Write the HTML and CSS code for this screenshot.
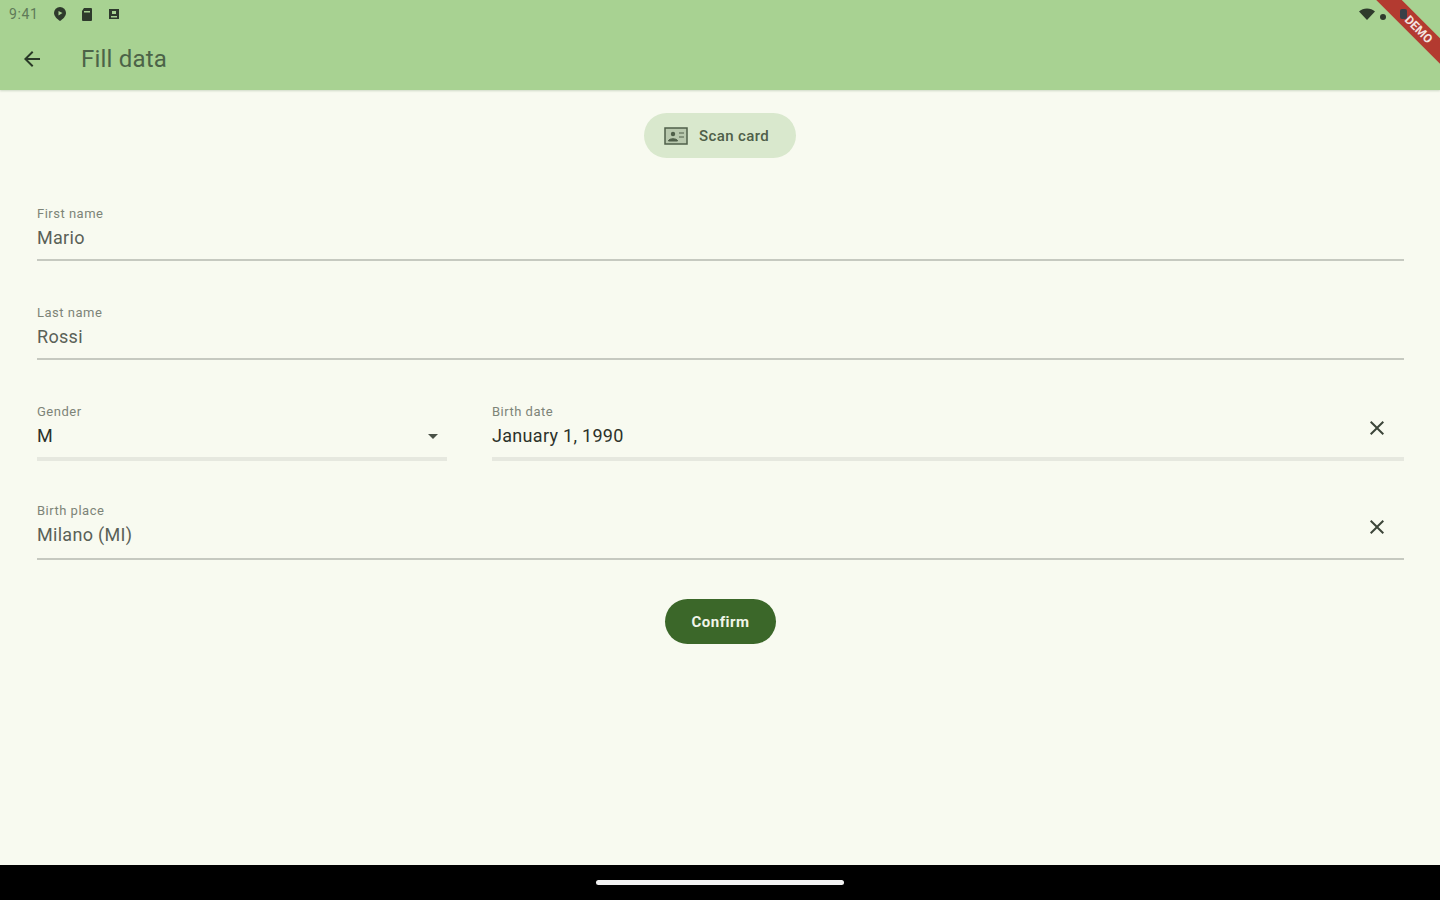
FILE: index.html
```html
<!DOCTYPE html>
<html lang="en">
<head>
    <meta charset="UTF-8">
    <title>Fill data</title>
    <link rel="stylesheet" href="styles.css">
</head>

<body>
<div class="app">
    <header class="top">
        <div class="status">
            <span class="time">9:41</span>
            <svg class="st-icon" viewBox="0 0 16 16"><path d="M8 1a6 6 0 0 1 6 6c0 3-3 6-6 8-3-2-6-5-6-8a6 6 0 0 1 6-6z" fill="#2e3a2c"/><path d="M6.5 5v4.5L10.500 7z" fill="#a8d292"/></svg>
            <svg class="st-icon" viewBox="0 0 16 16"><path d="M5 2h7a1 1 0 0 1 1 1v11a1 1 0 0 1-1 1H4a1 1 0 0 1-1-1V5z" fill="#2e3a2c"/><path d="M5 5h6v1.500H5z" fill="#a8d292"/></svg>
            <svg class="st-icon" viewBox="0 0 16 16"><path d="M3 3h10v10H3z" fill="#2e3a2c"/><path d="M6 5h4v3H6zM5 10h6v1.500H5z" fill="#a8d292"/></svg>
            <span class="status-right">
                <svg class="wifi" viewBox="0 0 16 16"><path d="M0 5.500C4 1.500 12 1.500 16 5.500L8 14z" fill="#2e3a2c"/></svg>
                <span class="dot"></span>
                <span class="battery"></span>
            </span>
        </div>
        <div class="toolbar">
            <svg class="back" viewBox="0 0 24 24"><path d="M20 11H7.800l5.600-5.600L12 4l-8 8 8 8 1.400-1.400L7.800 13H20z" fill="#2a3a28"/></svg>
            <h1 class="title">Fill data</h1>
        </div>
    </header>

    <main class="content">
        <button class="scan-btn">
            <svg class="scan-icon" viewBox="0 0 24 18"><rect x="1" y="1" width="22" height="16" fill="#b9c9ae" stroke="#4f5f49" stroke-width="1.500"/><circle cx="9" cy="7" r="2.200" fill="#4f5f49"/><path d="M4.500 14c0-3 9-3 9 0zM15 6h5M15 10h5" fill="#4f5f49" stroke="#4f5f49"/></svg>
            Scan card
        </button>

        <div class="form">
            <div class="field">
                <label class="field-label">First name</label>
                <div class="field-value muted">Mario</div>
            </div>
            <div class="field">
                <label class="field-label">Last name</label>
                <div class="field-value muted">Rossi</div>
            </div>
            <div class="row">
                <div class="field field-tall field-off gender">
                    <label class="field-label">Gender</label>
                    <div class="field-value">M</div>
                    <span class="caret"></span>
                </div>
                <div class="field field-tall field-off birth">
                    <label class="field-label">Birth date</label>
                    <div class="field-value">January 1, 1990</div>
                    <svg class="clear" viewBox="0 0 24 24"><path d="M19 6.400 17.600 5 12 10.600 6.400 5 5 6.400l5.600 5.600L5 17.600 6.400 19l5.600-5.600 5.600 5.600 1.400-1.400-5.600-5.600z" fill="#3c4539"/></svg>
                </div>
            </div>
            <div class="field field-tall">
                <label class="field-label">Birth place</label>
                <div class="field-value muted">Milano (MI)</div>
                <svg class="clear" viewBox="0 0 24 24"><path d="M19 6.400 17.600 5 12 10.600 6.400 5 5 6.400l5.600 5.600L5 17.600 6.400 19l5.600-5.600 5.600 5.600 1.400-1.400-5.600-5.600z" fill="#3c4539"/></svg>
            </div>
        </div>

        <button class="confirm-btn">Confirm</button>
    </main>

    <footer class="navbar"><span class="handle"></span></footer>

    <div class="debug">DEMO</div>
</div>
</body>
</html>
```

FILE: styles.css
```css
* {
  box-sizing: border-box;
}

body {
  margin: 0;
  font-family: Roboto, "Noto Sans", sans-serif;
  background: #f8faf0;
}

.app {
  position: relative;
  display: flex;
  flex-direction: column;
  height: 900px;
  overflow: hidden;
}

.top {
  height: 90px;
  background: #a8d292;
  box-shadow: 0 1px 2px rgba(80, 110, 70, .25);
}

.status {
  position: relative;
  z-index: 2;
  display: flex;
  align-items: center;
  height: 28px;
  padding-left: 9px;
}

.time {
  width: 43px;
  font-size: 14px;
  letter-spacing: .6px;
  color: #5f7a58;
}

.st-icon {
  width: 16px;
  height: 16px;
  margin-right: 11px;
}

.status-right {
  display: flex;
  align-items: center;
  margin-left: auto;
  padding-right: 33px;
}

.wifi {
  width: 16px;
  height: 16px;
}

.dot {
  width: 6px;
  height: 6px;
  margin: 6px 14px 0 5px;
  border-radius: 50%;
  background: #2e3a2c;
}

.battery {
  width: 7px;
  height: 10px;
  border-radius: 2px;
  background: #3a4048;
}

.toolbar {
  display: flex;
  align-items: center;
  height: 62px;
  padding-left: 20px;
}

.back {
  width: 24px;
  height: 24px;
}

.title {
  margin: 0 0 0 37px;
  font-size: 24px;
  font-weight: 400;
  letter-spacing: .2px;
  color: #4c6348;
}

.content {
  flex: 1;
  display: flex;
  flex-direction: column;
  align-items: center;
  padding: 23px 36px 0 37px;
}

.scan-btn {
  display: flex;
  align-items: center;
  gap: 11px;
  height: 45px;
  width: 152px;
  margin-left: -1px;
  padding: 0 0 0 20px;
  border: none;
  border-radius: 23px;
  font-family: inherit;
  font-size: 15px;
  font-weight: 500;
  letter-spacing: .4px;
  color: #4f5f49;
  background: #d9e8cd;
}

.scan-icon {
  width: 24px;
  height: 18px;
}

.form {
  display: flex;
  flex-direction: column;
  gap: 43px;
  width: 100%;
  margin-top: 47px;
}

.row {
  display: flex;
  gap: 45px;
  margin-bottom: -2px;
}

.field {
  position: relative;
  height: 56px;
  padding-top: 1px;
  border-bottom: 2px solid #c6c9c0;
}

.field-tall {
  height: 58px;
}

.field-off {
  border-bottom: 4px solid #e6e8df;
}

.gender {
  width: 410px;
}

.birth {
  flex: 1;
}

.field-label {
  display: block;
  font-size: 13px;
  line-height: 16px;
  letter-spacing: .5px;
  color: #7d8478;
}

.field-value {
  margin-top: 4px;
  font-size: 18px;
  line-height: 24px;
  letter-spacing: .3px;
  color: #2c322a;
}

.muted {
  color: #5a6157;
}

.caret {
  position: absolute;
  right: 9px;
  top: 31px;
  border-left: 5px solid transparent;
  border-right: 5px solid transparent;
  border-top: 5px solid #4a5147;
}

.clear {
  position: absolute;
  right: 15px;
  top: 13px;
  width: 24px;
  height: 24px;
}

.confirm-btn {
  width: 111px;
  height: 45px;
  margin-top: 39px;
  border: none;
  border-radius: 23px;
  font-family: inherit;
  font-size: 15px;
  font-weight: 700;
  letter-spacing: .5px;
  color: #f0f5e8;
  background: #3b6729;
}

.navbar {
  display: flex;
  justify-content: center;
  align-items: center;
  height: 35px;
  background: #000;
}

.handle {
  width: 248px;
  height: 5px;
  border-radius: 3px;
  background: #f2f2f2;
}

.debug {
  position: absolute;
  z-index: 1;
  top: 17px;
  right: -35px;
  width: 120px;
  height: 18px;
  padding-left: 10px;
  font-size: 12px;
  font-weight: 700;
  line-height: 18px;
  text-align: center;
  color: #f3e4e0;
  background: #b33a30;
  transform: rotate(45deg);
}
```
